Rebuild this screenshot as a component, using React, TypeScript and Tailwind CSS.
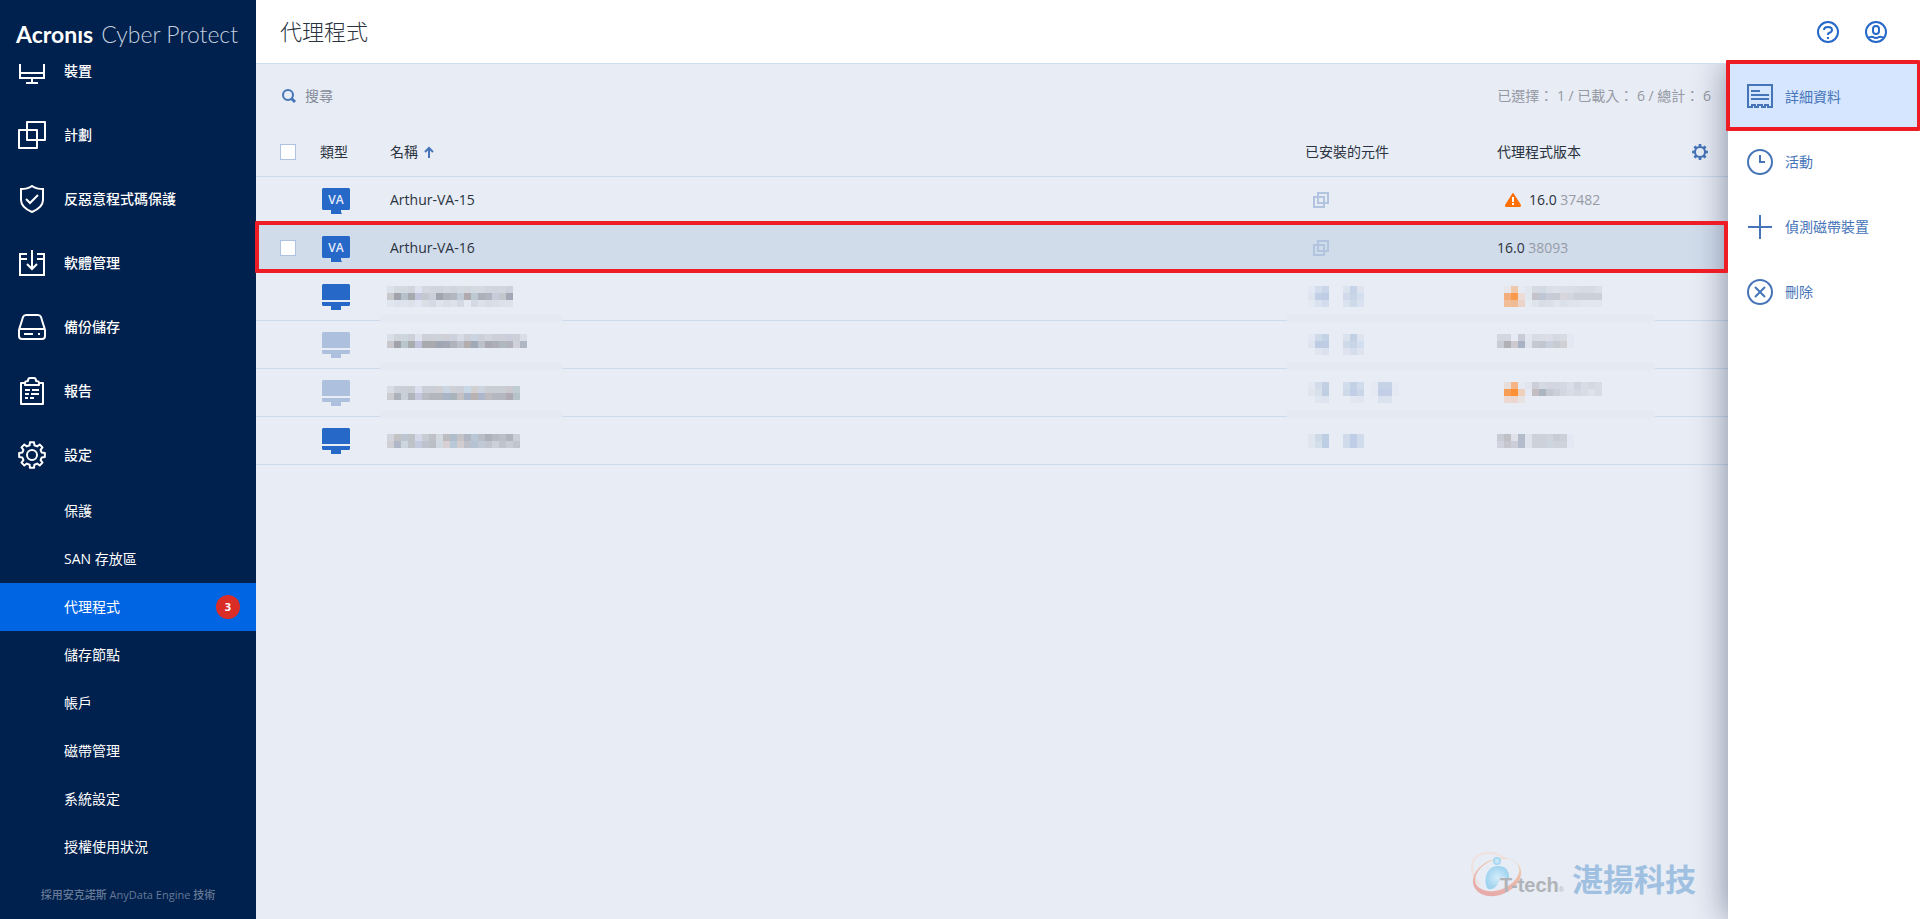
import React from 'react';
import { clsx } from 'clsx';

// Outline of a cog, drawn around the point (c, c)
const gearPath = (c: number, outer: number, inner: number, teeth = 8) => {
  const step = (Math.PI * 2) / teeth;
  const points: string[] = [];
  for (let i = 0; i < teeth; i++) {
    const mid = i * step - Math.PI / 2;
    const corners: [number, number][] = [
      [inner, -0.31],
      [outer, -0.2],
      [outer, 0.2],
      [inner, 0.31],
    ];
    corners.forEach(([r, k]) => {
      const a = mid + k * step;
      points.push(`${(c + r * Math.cos(a)).toFixed(2)} ${(c + r * Math.sin(a)).toFixed(2)}`);
    });
  }
  return `M${points.join('L')}Z`;
};

const NavIcon: React.FC<{ children: React.ReactNode }> = ({ children }) => (
  <svg width="28" height="28" viewBox="0 0 28 28" fill="none" stroke="currentColor" strokeWidth="2" className="shrink-0" aria-hidden="true">
    {children}
  </svg>
);

const navItems = [
  { label: '計劃', icon: <path d="M9 1H27V19H9ZM1 9H19V27H1Z" strokeLinejoin="round" /> },
  { label: '反惡意程式碼保護', icon: <path d="M14 1C17 3 21 4 25 4V15C25 20 21 24 14 27C7 24 3 20 3 15V4C7 4 11 3 14 1ZM8 14L12 18L20 10" /> },
  { label: '軟體管理', icon: <path d="M9 5H2V26H26V5H19M2 10H9M19 10H26M14 1V20M9 15L14 20L19 15" /> },
  {
    label: '備份儲存',
    icon: <path d="M8 2H20Q22 2 23 4L27 17V23Q27 26 24 26H4Q1 26 1 23V17L5 4Q6 2 8 2ZM2 16H26M6 21H15M20 21H22" />,
  },
  {
    label: '報告',
    icon: <path d="M7 6H3V27H25V6H21M7 8V6Q7 4 10 4Q10 1 12 1H16Q18 1 18 4Q21 4 21 6V8ZM7 13H12M14 13H21M7 17H11M13 17H21M7 21H10M12 21H16" strokeLinejoin="round" />,
  },
  {
    label: '設定',
    icon: (
      <>
        <path d={gearPath(14, 13, 10)} strokeLinejoin="round" />
        <circle cx="14" cy="14" r="5" />
      </>
    ),
  },
];

const subItems = [
  { label: '保護' },
  { label: 'SAN 存放區' },
  { label: '代理程式', active: true, badge: 3 },
  { label: '儲存節點' },
  { label: '帳戶' },
  { label: '磁帶管理' },
  { label: '系統設定' },
  { label: '授權使用狀況' },
];

const actions = [
  {
    label: '詳細資料',
    active: true,
    icon: <path d="M1 1H25V23H21V21H18V23H15V21H11V23H8V21H5V23H1ZM4 7H13M4 11H22M4 15H22" />,
  },
  {
    label: '活動',
    icon: (
      <>
        <circle cx="13" cy="13" r="12" />
        <path d="M13 6V13H18" />
      </>
    ),
  },
  { label: '偵測磁帶裝置', icon: <path d="M13 1V25M1 13H25" /> },
  {
    label: '刪除',
    icon: (
      <>
        <circle cx="13" cy="13" r="12" />
        <path d="M8 8L18 18M18 8L8 18" />
      </>
    ),
  },
];

// Masked values: one string per line of 7px cells, "-" leaves a cell empty
const Mosaic: React.FC<{ lines: string[] }> = ({ lines }) => {
  const grid = lines.map((line) => line.split(' '));
  const cols = Math.max(...grid.map((row) => row.length));
  return (
    <svg width={cols * 7} height={grid.length * 7} shapeRendering="crispEdges" className="block" aria-hidden="true">
      {grid.map((row, y) =>
        row.map((color, x) => (color === '-' ? null : <rect key={`${x}-${y}`} x={x * 7} y={y * 7} width="7" height="7" fill={`#${color}`} />))
      )}
    </svg>
  );
};

const maskedRows = [
  {
    online: true,
    name: [
      'dde1e9 d5d9e1 d2d9e1 d2d5dd dfe2ef d4d7df d2d5dd d0d4dc d3d7df d0d4dc d2d9e1 d4d6de d2d9e1 d5d9e1 d2d5dd d0d4dc d2d5dd cdd1dc',
      'c8c9cd a0a2ac b6c1cb a6aaae c3c5dc c6c8d0 cbcfd9 a0a4ae b0b3bb b3b7bf c0cad8 b0a9ae bcc8d2 abb0ba b0b4be c8ccda c4c8cc a3a8b6',
      'e1e5ee dde3ed dfe3ee dde1e9 e3e6f2 dadee6 d5d9e3 dfe3eb dadee6 dde1e9 d5d9e3 e5e9f2 d5d9e3 dde1e9 d8dce4 dadee6 dde1e9 dde1e9',
    ],
    parts: ['e3e9f3 d3ddeb c9d5e8 - - dbe3ee c5d2e7 dee3ef', 'dfe5f0 c0cee6 becde5 - - d0daea c8d5e7 d3deee', 'e5e9f2 dbe2ef d3dcec - - dbe2ef cddaea dae2ef'],
    version: [
      '- e5e7ed f0c8aa e6eaf3 e2e6ee d5d9e1 d1d9e3 dadee6 dde1e9 dbdfe7 dadee6 d8dce4 d6dae2 d6dae2 dcdfe9',
      '- f3ae7c fb9a4c ebdcd7 e3e7f0 c3c3c9 bec6d6 c8ccd8 c8cbd4 d8d7dd d2d6e0 cdd0d9 cdd0d9 cdd0d9 cdd0d9',
      '- f1be98 f0bb94 ecd3c7 e6eaf3 dfe3eb d8dee6 dbdfe7 e0e5f0 dbe1eb dfe3eb e0e4ec e2e6ee e2e6ee e2e5ee',
    ],
  },
  {
    online: false,
    name: [
      'dadee6 d0d4dc cdd6dd cdd0d8 dfe2ef cdd0d8 cfd1d9 cdd1d9 cfcfd5 cdd1dd d5dce6 cdd0d8 c9d5e0 cdd0d8 d2d5dd cdd0d8 cdd0d8 cbcddd cdd0d8 dadee6',
      'c9c9cd a1a3ac b9c6ce a8acae c0c3dc a8aaae a8aab0 a0a5b2 a2a8b5 b0b3bb bbc0ca b3adad a0a9b7 bbc0ca aaa8b3 acafb9 b0b9bd b2b3bd d0d1dc b0b7c4',
      '-',
    ],
    parts: ['e3e9f3 cfdbe8 c4d2e6 - - dae2ed c1d0e2 dee4ef', 'dfe5f0 bdcce3 becce4 - - cfdae9 c8d5e7 d3deee', '- e1e5ef dbe1ee - - dfe3ef d5deed dfe3ef'],
    version: ['d3d7df d3d7df e5eaf5 c8ccd8 e2e6ee d8dce4 dadde6 dbdee9 d5d9e1 d8dbe2 e3e9f3', 'c9ccd5 b0b1b5 cccace a8b2c4 e0e4ec c6c9d2 c3c6cf c9d0dd c8ccd2 cfcfd4 e2e9f3', '-'],
  },
  {
    online: false,
    name: [
      'd8dce6 ccd0d8 c8cfd7 c8cfd4 dbdeed cbced6 cbced6 cfced2 c9d5e2 cfd0d5 cbced6 c9d8e6 d2cfd0 ccd4e0 cbcdd5 cbcdd5 cbcdd5 cbc8d0 c0ccd3',
      'ccccd0 adb1b9 c9d1d8 b1b5bb c4c7de b9bcc3 b3b6bd b4b6bd a9b4c7 a9b3bc c3c1c3 aab5c8 b8b2b0 adb6cb bdbac0 b5b7c0 b5b7c0 b0aab7 b6c4ca',
    ],
    parts: [
      'e3e7ef d3dcea c3d0e3 - - d1dcec c3d1e5 d0dceb - e5e9f3 c6d3e7 c6d3e7 e5e9f3',
      'e0e5ee d8e0eb bfcee2 - - cedaea c1cee7 cbd7e9 - e5e9f3 c2cfe7 c2cfe7 e5e9f3',
      '- e0e6f0 dde4ef - - - e3e7f1 e1e6f1 - - dae2ee dae2ee -',
    ],
    version: [
      '- e8ded9 f7b583 e5e9f3 e2e5ee cccfd7 d5d9e3 d3d6e0 d3d6e0 d5d8e2 dbdee9 d0d3dd d8dce6 d5d8e2 d8dce6',
      '- f79d55 ff9035 eed0bc e5e9f3 c3bdc2 abb6c2 c3c8d1 cbcfd9 d2d7e1 d8dce4 d3d8e2 d8dce4 dde1e9 d8dce4',
      '- ecd9d1 ebd7cf e8e3e3',
    ],
  },
  {
    online: true,
    name: [
      'd2d5dd c3c3c6 bdc5d0 bfc2c6 d5d8e8 c9cbd2 bfc1c8 d3d9e1 bdbcc0 b0bdcb c3c3c8 b0b6c2 b9c6d5 b9bdc5 adb1ba b5bac4 bbbfc8 b0b4be cbcfd7',
      'd0d0d4 b0b7c8 cdd5de bfc2c6 c5cbde bdc2cc bbbec5 d0d8e2 d8cfd3 b9c8d8 d3cdd0 bbc0c9 b5c3d2 c0c9d5 c0c4cd cdd0d8 c0c4cc c8ccd4 c0c4cc',
    ],
    parts: ['e0e6ef cddae6 bdcee4 - - cfdaea c0cde6 d0dceb', 'e0e6ef d3e0eb bdcee4 - - cfdaea c0cde6 d0dceb'],
    version: ['c9ccd6 bfc0c5 dfe2e8 b4bccb dfe3eb cdd1d9 cdd1d9 ced5df c8ccd4 cdd0d8 e2e9f4', 'd1d4de c6c7cc cbced8 b4bccb dfe3eb cdd1d9 cdd1d9 cdd5df d0d3dc cfd3dc e2e9f4'],
  },
];

const VaMonitor = () => (
  <svg width="28" height="26" viewBox="0 0 28 26" className="block" role="img" aria-label="VA">
    <path d="M1 0H27L28 1V21L27 22H19V24L20 26H9V24V22H1L0 21V1Z" fill="#2668c8" />
    <text x="14" y="16" textAnchor="middle" fill="#e3ebf8" className="font-['Open_Sans',sans-serif] text-[12px] font-semibold">
      VA
    </text>
  </svg>
);

const Monitor: React.FC<{ online: boolean }> = ({ online }) => (
  <svg width="28" height="26" viewBox="0 0 28 26" className={clsx('block', online ? 'text-[#2668c8]' : 'text-[#adc0dd]')} aria-hidden="true">
    <path d="M1 0H27L28 1V16H0V1ZM0 18H28V21L27 22H19V26H9V22H1L0 21Z" fill="currentColor" />
  </svg>
);

const CopyIcon = () => (
  <svg width="16" height="16" viewBox="0 0 16 16" fill="none" stroke="#b3c4e1" strokeWidth="2" className="ml-2 block" aria-hidden="true">
    <path d="M5 1H15V11H5ZM1 5H11V15H1Z" />
  </svg>
);

const WarningIcon = () => (
  <svg width="16" height="16" viewBox="0 0 16 16" className="mx-2" aria-hidden="true">
    <path d="M7 2Q8 0 9 2L16 13Q16 15 15 15H1Q0 15 0 13Z" fill="#ff6f05" />
    <path d="M8 5V10M8 11V13" stroke="#fff" strokeWidth="2" />
  </svg>
);

const checkboxClass =
  'block size-4 appearance-none border border-[#b0c1e0] bg-white checked:bg-[#2668c8]';

const cellClass = 'border-b border-[#ccdaec] text-left font-normal';

const AgentRow: React.FC<{ name: string; build: string; warning?: boolean; selected?: boolean }> = ({ name, build, warning, selected }) => (
  <tr className={clsx('relative h-12', selected && 'bg-[#d1dceb]')}>
    <td className={clsx(cellClass, 'pb-0.5')}>
      {selected && (
        <>
          <input type="checkbox" aria-label={name} className={clsx(checkboxClass, 'ml-6')} />
          <div className="pointer-events-none absolute -left-px -top-1 bottom-0 right-0 z-20 rounded-[1px] border-4 border-[#ee1c25]" />
        </>
      )}
    </td>
    <td className={cellClass}>
      <div className="ml-[2px]">
        <VaMonitor />
      </div>
    </td>
    <td className={clsx(cellClass, 'pb-0.5')}>{name}</td>
    <td className={clsx(cellClass, 'pb-0.5')}>
      <CopyIcon />
    </td>
    <td className={clsx(cellClass, 'pb-0.5')} colSpan={2}>
      <div className="flex items-center">
        {warning && <WarningIcon />}
        <span>
          16.0 <span className="text-[#979ba5]">{build}</span>
        </span>
      </div>
    </td>
  </tr>
);

export default function App() {
  return (
    <div className="flex min-h-screen bg-[#e7ecf5] font-['Open_Sans','Noto_Sans_CJK_TC',sans-serif] text-sm text-[#2b3340]">
      <nav className="flex w-64 shrink-0 flex-col bg-[#00204d] text-white">
        <div className="flex h-16 items-center gap-2 whitespace-nowrap pl-4 pt-1 font-['Lato',sans-serif] text-[23px]" aria-label="Acronis Cyber Protect">
          <span className="font-bold">Acronıs</span>
          <span className="font-light text-[#c5cfdf]">Cyber Protect</span>
        </div>
        <ul>
          <li>
            <a href="#" className="flex h-[39px] items-start gap-[18px] pl-[18px] font-medium leading-none">
              <svg width="28" height="21" viewBox="0 7 28 21" fill="none" stroke="currentColor" strokeWidth="2" className="shrink-0" aria-hidden="true">
                <path d="M2 2H26V21H2ZM2 16H26M14 21V25M8 26H20" />
              </svg>
              裝置
            </a>
          </li>
          {navItems.map((item) => (
            <li key={item.label}>
              <a href="#" className="flex h-16 items-center gap-[18px] pl-[18px] font-medium">
                <NavIcon>{item.icon}</NavIcon>
                {item.label}
              </a>
            </li>
          ))}
          {subItems.map((item) => (
            <li key={item.label}>
              <a href="#" className={clsx('flex h-12 items-center justify-between pl-16 pr-4', item.active && 'bg-[#0065e3]')}>
                {item.label}
                {item.badge && (
                  <span className="flex size-6 items-center justify-center rounded-full bg-[#da2d27] text-[11px] font-bold">{item.badge}</span>
                )}
              </a>
            </li>
          ))}
        </ul>
        <p className="flex h-12 items-center justify-center text-[11px] font-medium text-[#667996]">採用安克諾斯 AnyData Engine 技術</p>
      </nav>

      <div className="flex min-w-0 flex-1 flex-col">
        <header className="z-20 flex h-16 items-center justify-between border-b border-[#d0dff0] bg-white pl-6 pr-8">
          <h1 className="text-[22px] font-light">代理程式</h1>
          <div className="flex gap-6 text-[#2668c8]">
            <button type="button" aria-label="Help">
              <svg width="24" height="24" viewBox="0 0 24 24" fill="none" stroke="currentColor" strokeWidth="2">
                <circle cx="12" cy="12" r="10" />
                <path d="M8 10Q8 7 12 7Q16 7 16 10Q16 12 13 13Q12 13 12 15M12 17V19" />
              </svg>
            </button>
            <button type="button" aria-label="Account">
              <svg width="24" height="24" viewBox="0 0 24 24" fill="none" stroke="currentColor" strokeWidth="2">
                <circle cx="12" cy="12" r="10" />
                <rect x="9" y="6" width="6" height="8" rx="3" />
                <path d="M4 18Q7 16 9 17Q12 19 15 17Q17 16 20 18" />
              </svg>
            </button>
          </div>
        </header>

        <div className="flex flex-1">
          <main className="flex min-w-0 flex-1 flex-col">
            <div className="flex h-16 items-center justify-between pl-6 pr-[17px]">
              <label className="flex items-center gap-[7px]">
                <svg width="18" height="16" viewBox="0 0 18 16" fill="none" stroke="#4674b8" strokeWidth="2" aria-hidden="true">
                  <circle cx="8" cy="7" r="5" />
                  <path d="M11 10L15 14" strokeWidth="3" />
                </svg>
                <input type="text" placeholder="搜尋" aria-label="搜尋" className="w-60 bg-transparent outline-none placeholder:text-[#868c99]" />
              </label>
              <p className="text-[#9599a3]">已選擇： 1 / 已載入： 6 / 總計： 6</p>
            </div>

            <table className="w-full table-fixed border-separate border-spacing-0">
              <colgroup>
                <col className="w-16" />
                <col className="w-[70px]" />
                <col />
                <col className="w-[192px]" />
                <col className="w-[179px]" />
                <col className="w-[52px]" />
              </colgroup>
              <thead>
                <tr className="h-[49px]">
                  <th className={cellClass}>
                    <input type="checkbox" aria-label="全選" className={clsx(checkboxClass, 'ml-6')} />
                  </th>
                  <th className={cellClass}>類型</th>
                  <th className={cellClass}>
                    <span className="flex items-center gap-[6px]">
                      名稱
                      <svg width="10" height="12" viewBox="0 0 10 12" fill="none" stroke="#4674b8" strokeWidth="2" aria-hidden="true">
                        <path d="M5 12V2M1 6L5 2L9 6" />
                      </svg>
                    </span>
                  </th>
                  <th className={cellClass}>已安裝的元件</th>
                  <th className={cellClass}>代理程式版本</th>
                  <th className={cellClass}>
                    <button type="button" aria-label="欄位設定" className="ml-4 block">
                      <svg width="16" height="16" viewBox="0 0 16 16" fill="#4674b8" fillRule="evenodd">
                        <path d={`${gearPath(8, 8, 6)}M8 4A4 4 0 1 0 8 12A4 4 0 1 0 8 4Z`} />
                      </svg>
                    </button>
                  </th>
                </tr>
              </thead>
              <tbody>
                <AgentRow name="Arthur-VA-15" build="37482" warning />
                <AgentRow name="Arthur-VA-16" build="38093" selected />
                {maskedRows.map((row, i) => {
                  const band = i < maskedRows.length - 1;
                  return (
                    <tr key={i} className="h-12">
                      <td className={cellClass} />
                      <td className={cellClass}>
                        <div className="ml-[2px]">
                          <Monitor online={row.online} />
                        </div>
                      </td>
                      <td className={clsx(cellClass, 'relative')}>
                        <div className="-ml-[3px]">
                          <Mosaic lines={row.name} />
                        </div>
                        {band && <span className="absolute -bottom-[2px] -left-[10px] h-[7px] w-[183px] bg-[#e4e9f4]" />}
                      </td>
                      <td className={clsx(cellClass, 'relative')}>
                        <div className="ml-[3px]">
                          <Mosaic lines={row.parts} />
                        </div>
                        {band && <span className="absolute -bottom-[2px] -left-[18px] h-[7px] w-[368px] bg-[#e4e9f4]" />}
                      </td>
                      <td className={cellClass}>
                        <Mosaic lines={row.version} />
                      </td>
                      <td className={cellClass} />
                    </tr>
                  );
                })}
              </tbody>
            </table>

            <div className="mb-4 mr-8 mt-auto flex h-14 items-center justify-end">
              <svg width="54" height="46" viewBox="0 0 54 46" fill="none" aria-hidden="true">
                <defs>
                  <linearGradient id="ring" x1="0" y1="1" x2="1" y2="0">
                    <stop offset="0" stopColor="#e6a4aa" />
                    <stop offset="0.5" stopColor="#ebb9ab" />
                    <stop offset="1" stopColor="#f0dcb2" />
                  </linearGradient>
                  <radialGradient id="drop">
                    <stop offset="0" stopColor="#d3edfa" />
                    <stop offset="1" stopColor="#9fd3ef" />
                  </radialGradient>
                </defs>
                <path d="M36 7C20-4 2 0 2 16Q3 26 10 33" stroke="#f0e0de" strokeWidth="2" />
                <g transform="rotate(-22 27 25)">
                  <path
                    d="M2 25A25 18 0 1 0 52 25A25 18 0 1 0 2 25ZM5 23A23 15 0 1 1 51 23A23 15 0 1 1 5 23Z"
                    fill="url(#ring)"
                    fillRule="evenodd"
                  />
                </g>
                <circle cx="27" cy="9" r="4" fill="url(#drop)" />
                <path d="M18 37C13 31 15 14 28 14C37 14 40 20 39 29C36 24 31 24 29 29C27 35 23 38 18 37Z" fill="url(#drop)" />
              </svg>
              <span className="-ml-6 mt-5 font-['Liberation_Sans',sans-serif] text-xl font-bold text-[#b0b3b8]">
                T-tech<span className="text-[7px] font-normal">®</span>
              </span>
              <span className="ml-2 mt-2 text-[31px] font-bold text-[#9fc0e0]">湛揚科技</span>
            </div>
          </main>

          <aside className="relative z-10 w-48 shrink-0 bg-white shadow-[0_0_32px_rgba(0,16,48,0.45)]">
            {actions.map((action) => (
              <button
                key={action.label}
                type="button"
                className={clsx(
                  'flex h-[65px] w-full items-center gap-3 pl-[19px] text-[#4674b8]',
                  action.active && 'bg-[#d6e6fe]'
                )}
              >
                <svg width="26" height="26" viewBox="0 0 26 26" fill="none" stroke="currentColor" strokeWidth="2" className="shrink-0" aria-hidden="true">
                  {action.icon}
                </svg>
                {action.label}
              </button>
            ))}
          </aside>
          <div className="pointer-events-none absolute right-0 top-[60px] z-30 h-[71px] w-[194px] rounded-[1px] border-4 border-r-[3px] border-[#ee1c25]" />
        </div>
      </div>
    </div>
  );
}
